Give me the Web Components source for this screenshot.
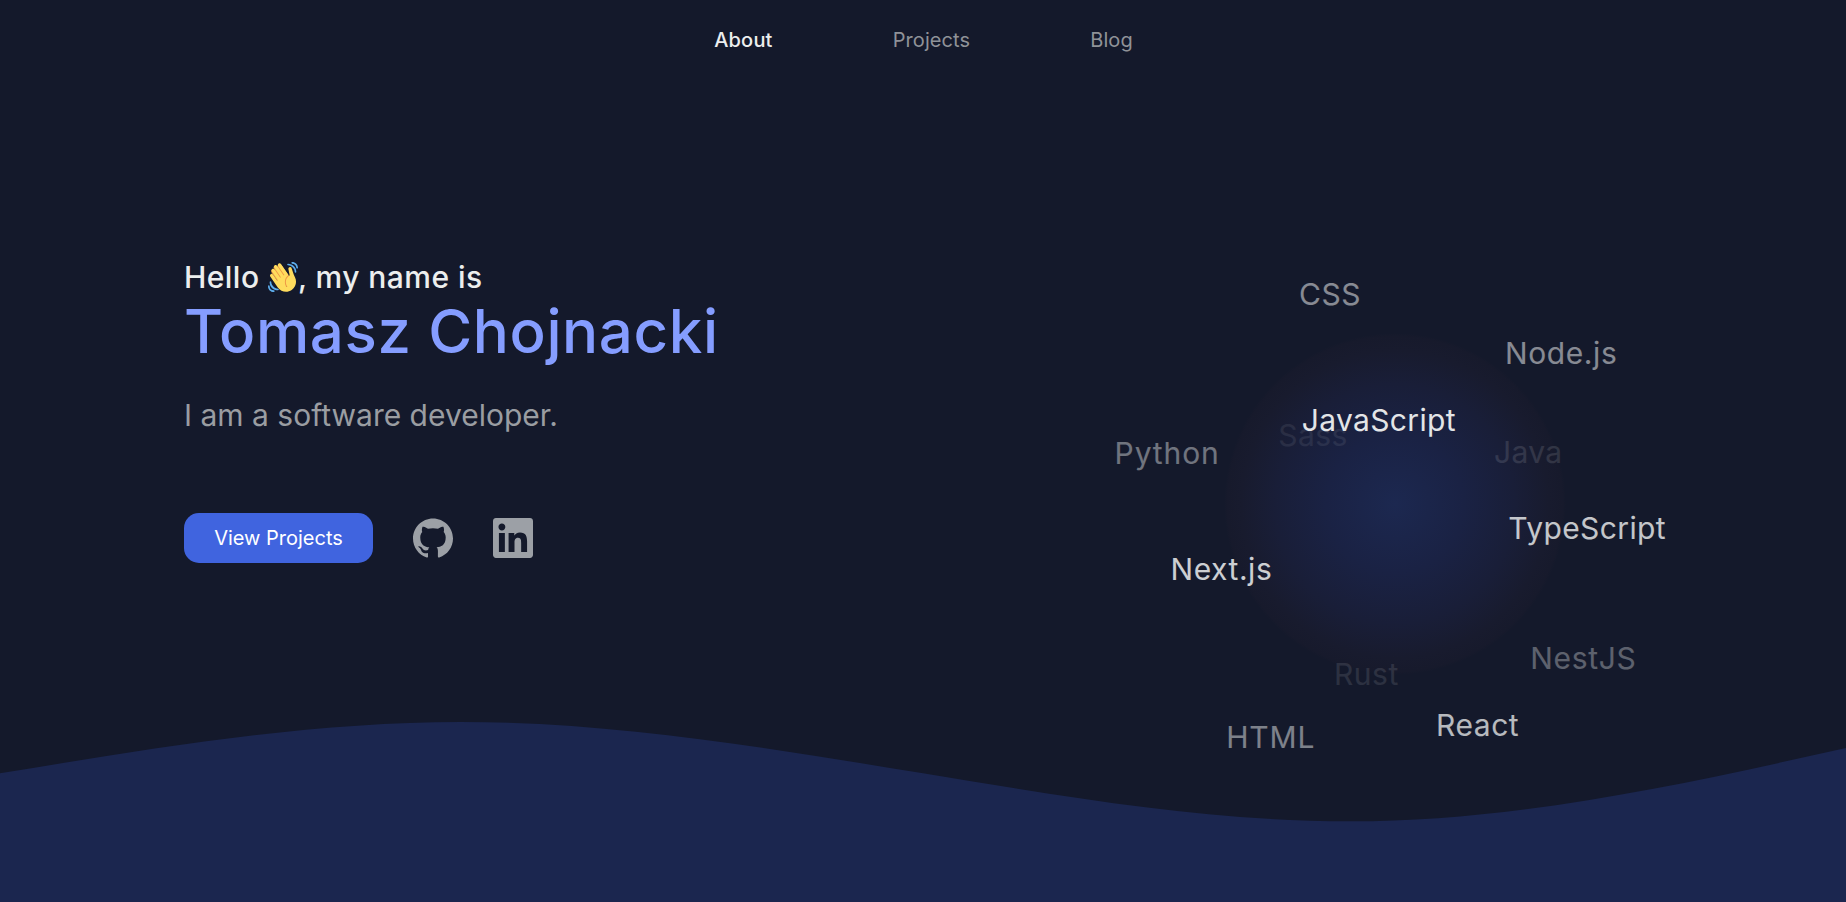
<!DOCTYPE html>
<html lang="en">
<head>
<meta charset="utf-8">
<title>Tomasz Chojnacki</title>
<style>
html,body{height:100%}
body{margin:0;background:#14192b;color:#eceeee;font:20px/24px Inter,"Liberation Sans",sans-serif;overflow:hidden}
</style>
</head>
<body>
<portfolio-page></portfolio-page>
<script>
const define = (name, html) => {
  const t = document.createElement('template');
  t.innerHTML = html;
  customElements.define(name, class extends HTMLElement {
    constructor() {
      super();
      this.attachShadow({ mode: 'open' }).append(t.content.cloneNode(true));
    }
  });
};

define('nav-link', `<style>
  :host{display:block;color:#8f9298;letter-spacing:.1px}
  :host([active]){color:#eceeee;font-weight:500;letter-spacing:.2px}
  a{color:inherit;cursor:pointer}
</style><a><slot></slot></a>`);

define('site-nav', `<style>
  :host{display:flex;justify-content:center;gap:120px;padding:28px 0 28px 1px}
</style><nav-link active>About</nav-link><nav-link>Projects</nav-link><nav-link>Blog</nav-link>`);

define('waving-hand', `<style>
  :host{display:inline-block;width:30px;height:30px;vertical-align:-4px}
  svg{display:block}
</style><svg width="30" height="30" viewBox="0 0 36 36"><path fill="#EF9645" d="M4.861 9.147c.94-.657 2.357-.531 3.201.166l-.968-1.407c-.779-1.111-.5-2.313.612-3.093 1.112-.777 4.263 1.312 4.263 1.312-.786-1.122-.639-2.544.483-3.331 1.122-.784 2.67-.513 3.456.611l10.292 14.72L25 31l-11.083-4.042L4.25 12.625c-.793-1.129-.519-2.686.611-3.478z"/><path fill="#FFDC5D" d="M2.695 17.336s-1.132-1.65.519-2.781c1.649-1.131 2.78.518 2.78.518l5.251 7.658c.181-.302.379-.6.6-.894L4.557 11.21s-1.131-1.649.519-2.78c1.649-1.131 2.78.518 2.78.518l6.855 9.997c.255-.208.516-.417.785-.622L7.549 6.732s-1.131-1.649.519-2.78c1.649-1.131 2.78.518 2.78.518l7.947 11.589c.292-.179.581-.334.871-.498L12.238 4.729s-1.131-1.649.518-2.78c1.649-1.131 2.78.518 2.78.518l7.854 11.454 1.194 1.742c-4.948 3.394-5.419 9.779-2.592 13.902.565.825 1.39.26 1.39.26-3.393-4.949-2.357-10.51 2.592-13.903L24.515 8.62s-.545-1.924 1.378-2.47c1.924-.545 2.47 1.379 2.47 1.379l1.685 5.004c.668 1.984 1.379 3.961 2.32 5.831 2.657 5.28 1.07 11.842-3.94 15.279-5.465 3.747-12.936 2.354-16.684-3.11L2.695 17.336z"/><g fill="#5DADEC"><path d="M12 32.042C8 32.042 3.958 28 3.958 24c0-.553-.405-1-.958-1s-1.042.447-1.042 1C1.958 30 6 34.042 12 34.042c.553 0 1-.489 1-1.042s-.447-.958-1-.958z"/><path d="M7 34c-3 0-5-2-5-5 0-.553-.447-1-1-1s-1 .447-1 1c0 4 3 7 7 7 .553 0 1-.447 1-1s-.447-1-1-1zM24 2c-.552 0-1 .448-1 1s.448 1 1 1c4 0 8 3.589 8 8 0 .552.448 1 1 1s1-.448 1-1c0-5.514-4-10-10-10z"/><path d="M29 .042c-.552 0-1 .406-1 .958s.448 1.042 1 1.042c3 0 4.958 2.225 4.958 4.958 0 .552.489 1 1.042 1s.958-.448.958-1C35.958 3.163 33 .042 29 .042z"/></g></svg>`);

define('action-button', `<style>
  :host{display:block}
  button{display:block;width:189px;height:50px;padding:0;border:0;border-radius:15px;background:#4064df;color:#fff;font:inherit}
</style><button><slot></slot></button>`);

define('icon-link', `<style>
  :host{display:block;width:40px;height:40px;color:#9ca0a6}
  ::slotted(svg){display:block;width:40px;height:40px;fill:currentColor}
</style><slot></slot>`);

define('hero-intro', `<style>
  :host{display:block;padding-top:179px}
  p,h1{margin:0;font-size:30px;line-height:36px}
  .hello{font-weight:500;letter-spacing:.45px}
  h1{font-weight:500;font-size:60px;line-height:72px;letter-spacing:.61px;color:#859dff;margin-bottom:30px}
  .role{color:#9a9da2;margin-bottom:80px}
  .actions{display:flex;align-items:center;gap:40px}
</style>
<p class="hello">Hello <waving-hand></waving-hand>, my name is</p>
<h1>Tomasz Chojnacki</h1>
<p class="role">I am a software developer.</p>
<div class="actions">
  <action-button>View Projects</action-button>
  <icon-link><svg viewBox="0 0 24 24"><path d="M12 .297c-6.63 0-12 5.373-12 12 0 5.303 3.438 9.8 8.205 11.385.6.113.82-.258.82-.577 0-.285-.01-1.04-.015-2.04-3.338.724-4.042-1.61-4.042-1.61C4.422 18.07 3.633 17.7 3.633 17.7c-1.087-.744.084-.729.084-.729 1.205.084 1.838 1.236 1.838 1.236 1.07 1.835 2.809 1.305 3.495.998.108-.776.417-1.305.76-1.605-2.665-.3-5.466-1.332-5.466-5.93 0-1.31.465-2.38 1.235-3.22-.135-.303-.54-1.523.105-3.176 0 0 1.005-.322 3.3 1.23.96-.267 1.98-.399 3-.405 1.02.006 2.04.138 3 .405 2.28-1.552 3.285-1.23 3.285-1.23.645 1.653.24 2.873.12 3.176.765.84 1.23 1.91 1.23 3.22 0 4.61-2.805 5.625-5.475 5.92.42.36.81 1.096.81 2.22 0 1.606-.015 2.896-.015 3.286 0 .315.21.69.825.57C20.565 22.092 24 17.592 24 12.297c0-6.627-5.373-12-12-12"/></svg></icon-link>
  <icon-link><svg viewBox="0 0 24 24"><path d="M20.447 20.452h-3.554v-5.569c0-1.328-.027-3.037-1.852-3.037-1.853 0-2.136 1.445-2.136 2.939v5.667H9.351V9h3.414v1.561h.046c.477-.9 1.637-1.85 3.37-1.85 3.601 0 4.267 2.37 4.267 5.455v6.286zM5.337 7.433c-1.144 0-2.063-.926-2.063-2.065 0-1.138.92-2.063 2.063-2.063 1.14 0 2.064.925 2.064 2.063 0 1.139-.925 2.065-2.064 2.065zm1.782 13.019H3.555V9h3.564v11.452zM22.225 0H1.771C.792 0 0 .774 0 1.729v20.542C0 23.227.792 24 1.771 24h20.451C23.2 24 24 23.227 24 22.271V1.729C24 .774 23.2 0 22.222 0h.003z"/></svg></icon-link>
</div>`);

/* Skills float on a sphere: left edge, baseline, letter spacing and depth (opacity). */
const skills = [
  ['Sass', 355.3, 446, .45, .08], ['Rust', 411, 685, .5, .11], ['Java', 571, 463, .35, .12],
  ['NestJS', 607.3, 669, .65, .33], ['Python', 191.6, 464, .9, .42], ['HTML', 303.2, 748, .85, .48],
  ['CSS', 376, 305, .5, .52], ['Node.js', 582, 364, .6, .52], ['React', 513, 736, .55, .74],
  ['TypeScript', 585.3, 539, .39, .8], ['Next.js', 247.5, 580, .55, .84], ['JavaScript', 378.7, 431, .36, .94]
];
customElements.define('skill-cloud', class extends HTMLElement {
  constructor() {
    super();
    const tags = skills.map(([name, x, y, ls, o]) =>
      `<span style="left:${x}px;top:${y - 109}px;letter-spacing:${ls}px;opacity:${o}">${name}</span>`).join('');
    this.attachShadow({ mode: 'open' }).innerHTML = `<style>
      :host{display:block;position:relative;font-size:30px;line-height:36px;color:#f0f2f2}
      i{position:absolute;left:301px;top:253px;width:342px;height:342px;border-radius:50%;
        background:radial-gradient(closest-side,#1c2850,#1a2244 40%,#191e38 70%,#181b2e 90%,#171a2c 98%,#14192b)}
      span{position:absolute;white-space:nowrap}
    </style><i></i>${tags}`;
  }
});

define('wave-floor', `<style>
  :host{display:block;width:100%;height:180px}
  svg{display:block;width:100%;height:100%}
</style><svg viewBox="0 722 1846 180" preserveAspectRatio="none"><path fill="#1b264f" d="M0 773.3C154 748 308 722 461 722S769 748 923 773.3 1208 821.3 1350 821.3C1515 821.3 1681 785 1846 748V902H0Z"/></svg>`);

define('portfolio-page', `<style>
  :host{display:grid;grid-template-rows:auto 1fr;height:100vh;position:relative}
  wave-floor{position:absolute;left:0;bottom:0;z-index:-1}
  main{display:grid;grid-template-columns:1fr 1fr}
  hero-intro{padding-left:184px}
</style>
<wave-floor></wave-floor>
<site-nav></site-nav>
<main><hero-intro></hero-intro><skill-cloud></skill-cloud></main>`);
</script>
</body>
</html>
